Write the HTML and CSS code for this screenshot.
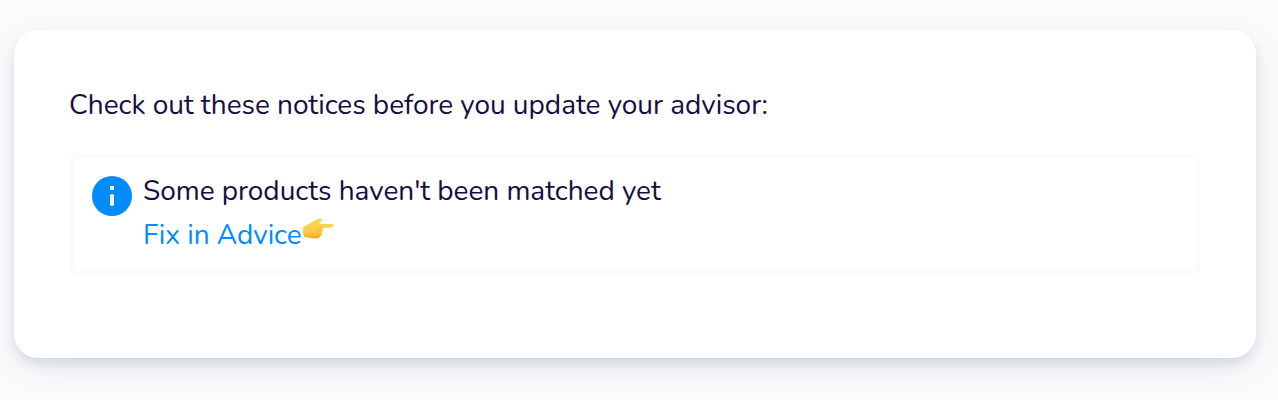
FILE: index.html
```html
<!DOCTYPE html>
<html lang="en">
<head>
  <meta charset="UTF-8" />
  <meta name="viewport" content="width=device-width, initial-scale=1" />
  <title>Update your advisor</title>
  <link rel="stylesheet" href="styles.css">
</head>
<body>

<div class="card">
  <p class="intro">Check out these notices before you update your advisor:</p>

  <div class="notice">
    <svg class="info-icon" viewBox="0 0 40 40" aria-hidden="true">
      <circle cx="20" cy="20" r="20" fill="#008cff" />
      <rect x="18" y="10" width="4" height="4" fill="#fff" />
      <rect x="18" y="18" width="4" height="12" rx="1.8" fill="#fff" />
    </svg>
    <div class="notice-text">
      <p class="message">Some products haven't been matched yet</p>
      <div class="action">
        <a class="fix-link" href="#">Fix in Advice</a>
        <svg class="hand-icon" viewBox="0 0 32 22" aria-hidden="true">
          <defs>
            <linearGradient id="skin" x1="0" y1="0" x2="0" y2="1">
              <stop offset="0" stop-color="#ffd65a" />
              <stop offset="0.65" stop-color="#fdcb45" />
              <stop offset="1" stop-color="#eeaa32" />
            </linearGradient>
          </defs>
          <path d="M1.2 9.5C3 7.6 5.6 6.7 8 5.2C11 3.6 14 1.6 17.2.6C19.6 0 20.9 1.9 19.4 3.3L17 5.8L29.8 6.1C31.9 6.1 31.9 9.2 29.8 9.4L20.3 10C21.4 10.7 21.2 12 20.1 12.8C21 13.8 20.5 15.4 19.3 15.9C20 17.2 18.9 18.6 17.6 18.8C17.5 20 16.2 20.6 14.8 20.5C10.6 20.4 6.5 19.4 2.4 18.9C.8 16.1.6 12.5 1.2 9.5Z" fill="url(#skin)" />
          <path d="M20.1 12.8C18.2 13.5 16.2 13.2 14.5 12.6M19.3 15.9C17.5 16.4 15.7 16.1 14.2 15.5M17.6 18.8C16 19 14.8 18.7 13.6 18.2M20.3 10L16 10.1" fill="none" stroke="#e6a02d" stroke-width="0.5" stroke-linecap="round" />
        </svg>
      </div>
    </div>
  </div>
</div>

</body>
</html>
```
FILE: styles.css
```css
body {
  margin: 0;
  padding: 30px 22px 42px 14px;
  box-sizing: border-box;
  height: 400px;
  overflow: hidden;
  background: #fafbfd;
  font-family: Nunito, Lato, sans-serif;
  font-size: 28px;
  letter-spacing: -0.03px;
  color: #190d41;
}

p {
  margin: 0;
}

.card {
  box-sizing: border-box;
  height: 328px;
  padding: 53px 56px 0;
  border-radius: 24px;
  background: #fff;
  box-shadow: 0 10px 36px rgba(38, 60, 60, 0.08), 0 7px 14px -2px rgba(38, 60, 60, 0.14);
}

.intro {
  margin-left: -1px;
  line-height: 44px;
  white-space: nowrap;
}

.notice {
  display: flex;
  box-sizing: border-box;
  height: 120px;
  margin-top: 27px;
  padding: 11px 18px;
  border: 4px solid #fafaff;
  border-radius: 6px;
}

.info-icon {
  flex: none;
  width: 40px;
  height: 40px;
  margin: 7px 11px 0 0;
}

.message,
.action {
  line-height: 44px;
  white-space: nowrap;
}

.action {
  display: flex;
}

.fix-link {
  color: #008cff;
  text-decoration: none;
}

.hand-icon {
  width: 32px;
  height: 22px;
  margin-top: 5px;
}
```
